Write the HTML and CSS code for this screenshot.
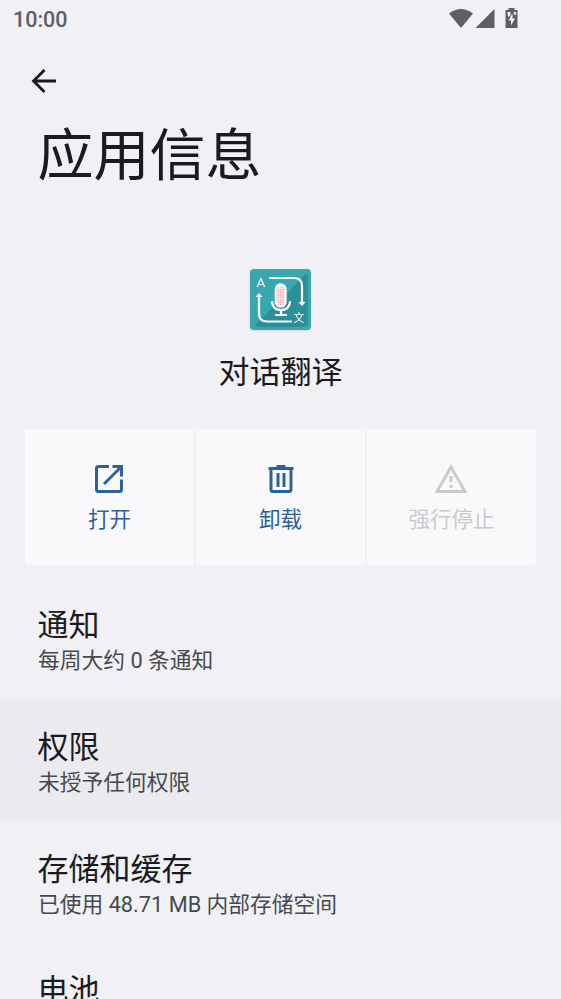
FILE: index.html
```html
<!DOCTYPE html>
<html lang="zh-CN">
<head>
<meta charset="utf-8">
<title>应用信息</title>
<link rel="stylesheet" href="styles.css">
</head>
<body>
<header class="status">
  <span class="clock">10:00</span>
  <svg class="status-icons" width="72" height="22" viewBox="0 0 72 22">
    <path d="M0 5.500Q12-3.500 24 5.500L12 20Z"/>
    <path d="M45.500 1V20H26.500Z"/>
    <path d="M56.500 2H59.500V0H65.500V2H68.500V20H56.500V2Z"/>
    <path class="bolt" d="M63 6L59.500 12.500H62V17.500L66 10.500H63.500V6ZM58.500 4H61.500V7L59.500 9L58.500 6ZM64.500 4H67V7H65.500Z"/>
  </svg>
</header>
<nav class="toolbar">
  <svg class="back" width="26" height="26" viewBox="0 0 26 26"><path d="M25 13H3M13.500 2L2.500 13L13.500 24"/></svg>
</nav>
<h1 class="title">应用信息</h1>
<section class="app">
  <svg class="app-icon" width="61" height="61" viewBox="0 0 61 61">
    <defs><pattern id="grille" width="2.500" height="2.500" patternUnits="userSpaceOnUse"><rect width="2.500" height="2.500" fill="#fff"/><rect width="1.900" height="1.900" fill="#f8b0b0"/></pattern></defs>
    <rect width="61" height="61" rx="4" fill="#38a8ae"/>
    <path d="M5 56L56 5Q58 6 58 9V54Q58 58 54 58H9Q6 58 5 56Z" fill="#2d8f97"/>
    <g fill="none" stroke="#fff" stroke-width="2.200" stroke-linecap="round"><path d="M20 9H44Q52 9 52 17V34M41 52.500H17Q9 52.500 9 44.500V27"/><path d="M22 33Q23 41 31 41T40 33M31 41V46M26 46H36"/></g>
    <path d="M48.500 33H55.500L52 37ZM5.500 28L9 24L12.500 28Z" fill="#fff"/>
    <rect x="24.700" y="14.300" width="12" height="24.500" rx="6" fill="#fff"/>
    <rect x="26.500" y="18" width="8.500" height="18" rx="3.500" fill="url(#grille)"/>
    <text x="6.500" y="17.600" class="icon-letter">A</text><text x="43.500" y="52.500" class="icon-cjk">文</text>
  </svg>
  <h2 class="app-name">对话翻译</h2>
</section>
<div class="actions">
  <button class="action"><svg width="31" height="30" viewBox="0 0 31 30"><path class="line" d="M15 2.500H4.500Q2.500 2.500 2.500 4.500V25.500Q2.500 27.500 4.500 27.500H25.500Q27.500 27.500 27.500 25.500V15.500M18.500 2.500H27.500V12.500M27 3L10 20"/></svg><span>打开</span></button>
  <button class="action"><svg width="30" height="30" viewBox="0 0 30 30"><path class="line" d="M5 4V25.500Q5 27.500 7 27.500H23Q25 27.500 25 25.500V4M2.500 4.500H27.500M10.500 2.500H19.500"/><path d="M10.500 9H13.500V23H10.500ZM16.500 9H19.500V23H16.500Z"/></svg><span>卸载</span></button>
  <button class="action" disabled><svg width="35" height="30" viewBox="0 0 35 30"><path fill-rule="evenodd" d="M17 0L33.500 29H.5ZM17 6L5.500 26H28.500ZM15.500 12H18.500V18H15.500ZM15.500 21H18.500V24H15.500Z"/></svg><span>强行停止</span></button>
</div>
<main class="list">
  <section class="item"><h3>通知</h3><p>每周大约 0 条通知</p></section>
  <section class="item pressed"><h3>权限</h3><p>未授予任何权限</p></section>
  <section class="item"><h3>存储和缓存</h3><p>已使用 48.71 MB 内部存储空间</p></section>
  <section class="item"><h3>电池</h3></section>
</main>
</body>
</html>
```
FILE: styles.css
```css
* { box-sizing: border-box; }
body { margin: 0; height: 999px; overflow: hidden; background: #f0f0f5; color: #1a1b1c; font-family: Roboto, "Noto Sans CJK SC", sans-serif; }
h1, h2, h3, p { margin: 0; font-weight: 400; }
svg { display: block; }
.status { height: 40px; padding: 8px 40px 0 13px; display: flex; justify-content: space-between; color: #5f5f62; }
.clock { font-size: 21.500px; line-height: 24px; font-weight: 500; }
.status-icons { fill: #5f5f62; }
.status-icons .bolt { fill: #f0f0f5; }
.toolbar { height: 80px; padding: 28px 0 0 30.500px; }
.back { fill: none; stroke: #1a1b1c; stroke-width: 2.800; }
.title { height: 148px; padding: 1px 0 0 37.500px; font-size: 56px; line-height: 70px; }
.app { height: 161px; display: flex; flex-direction: column; align-items: center; }
.app-icon { margin-top: 1px; filter: drop-shadow(0 1px 1px #00000020); }
.icon-letter { font-size: 13.500px; fill: #fff; }
.icon-cjk { font-size: 11px; fill: #fff; }
.app-name { margin-top: 23px; font-size: 31px; line-height: 40px; }
.actions { height: 136px; margin: 0 25px; display: grid; grid-template-columns: repeat(3, 1fr); gap: 2px; border-radius: 3px; overflow: hidden; }
.action { border: 0; padding: 35px 0 0; display: flex; flex-direction: column; align-items: center; justify-content: flex-start; background: #f9f9fc; color: #2c6199; font: 400 21.500px/32px Roboto, "Noto Sans CJK SC", sans-serif; }
.action svg { fill: currentColor; }
.action .line { fill: none; stroke: currentColor; stroke-width: 3; }
.action span { margin-top: 10px; }
.action:disabled { color: #c9cacc; }
.list { height: 434px; padding-top: 12px; overflow: hidden; }
.item { height: 121.800px; padding: 29px 38px 0; }
.item h3 { margin-left: -.5px; font-size: 31px; line-height: 40px; }
.item p { color: #46494c; font-size: 21.750px; line-height: 30px; }
.pressed { background: #ebebef; }
```
